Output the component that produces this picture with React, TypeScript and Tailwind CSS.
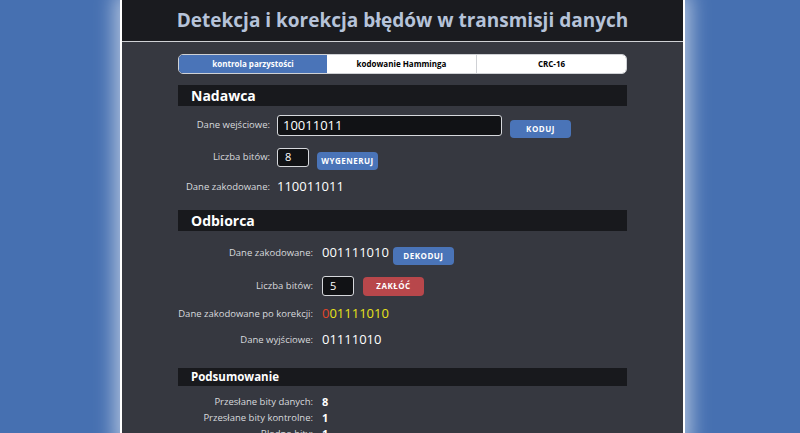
import React from "react"

const font = { fontFamily: '"Open Sans", "Noto Sans", sans-serif' }

const Btn = ({ children, red }: { children: React.ReactNode; red?: boolean }) => (
  <button
    className={
      "h-[18px] w-[61px] rounded-[4px] text-[8px] font-bold tracking-[0.5px] text-white " +
      (red ? "bg-[#b8474b]" : "bg-[#4a74b8]")
    }
  >
    {children}
  </button>
)

const SectionBar = ({ title, small }: { title: string; small?: boolean }) => (
  <div
    className={
      "bg-[#18191d] pl-[13px] font-bold text-white " +
      (small ? "h-[18px] text-[11.5px] leading-[18px]" : "h-[21px] text-[14px] leading-[21px]")
    }
  >
    {title}
  </div>
)

const Label = ({ children, w }: { children: React.ReactNode; w: string }) => (
  <span className={"whitespace-nowrap text-right text-[9.5px] text-[#d8dade] " + w}>{children}</span>
)

export default function App() {
  return (
    <div className="min-h-[433px] bg-[#4670b1] pl-[120px]" style={font}>
      <div className="min-h-[433px] w-[565px] border-x-2 border-white bg-[#363840] shadow-[0_0_18px_6px_rgba(255,255,255,0.55)]">
        <header className="h-[42px] border-b border-[#cfd1d5] bg-[#1a1b1f] text-center text-[19px] font-bold leading-[40px] text-[#b6c3d9]">
          Detekcja i korekcja błędów w transmisji danych
        </header>

        <div className="px-[56px] pt-[12px]">
          {/* tabs */}
          <div className="flex h-[20px] overflow-hidden rounded-[5px] border border-[#cfd1d5] text-[8px] font-bold leading-[18px]">
            <div className="w-[148px] bg-[#4a74b8] text-center text-white">kontrola parzystości</div>
            <div className="w-[150px] border-r border-[#cfd1d5] bg-white text-center text-black">kodowanie Hamminga</div>
            <div className="flex-1 bg-white text-center text-black">CRC-16</div>
          </div>

          <div className="mt-[11px]">
            <SectionBar title="Nadawca" />
          </div>

          {/* sender */}
          <div className="mt-[9px] flex flex-col">
            <div className="flex h-[21px] items-center gap-[7px]">
              <Label w="w-[92px]">Dane wejściowe:</Label>
              <div className="flex h-[21px] w-[225px] items-center rounded-[3px] border border-[#d6d8dc] bg-[#111215] px-[5px] text-[13px] text-white">
                10011011
              </div>
              <span className="ml-[1px]">
                <Btn>KODUJ</Btn>
              </span>
            </div>
            <div className="mt-[12px] flex h-[19px] items-center gap-[7px]">
              <Label w="w-[92px]">Liczba bitów:</Label>
              <div className="flex h-[19px] w-[32px] items-center rounded-[3px] border border-[#d6d8dc] bg-[#111215] px-[7px] text-[11px] text-white">
                8
              </div>
              <span className="ml-[1px]">
                <Btn>WYGENERUJ</Btn>
              </span>
            </div>
            <div className="mt-[12px] flex h-[16px] items-center gap-[7px]">
              <Label w="w-[92px]">Dane zakodowane:</Label>
              <span className="text-[13px] text-white">110011011</span>
            </div>
          </div>

          <div className="mt-[15px]">
            <SectionBar title="Odbiorca" />
          </div>

          {/* receiver */}
          <div className="mt-[13px] flex flex-col">
            <div className="flex h-[18px] items-center">
              <Label w="w-[135px]">Dane zakodowane:</Label>
              <span className="ml-[9px] text-[13px] text-white">001111010</span>
              <span className="ml-[4px]">
                <Btn>DEKODUJ</Btn>
              </span>
            </div>
            <div className="mt-[14px] flex h-[20px] items-center gap-[9px]">
              <Label w="w-[135px]">Liczba bitów:</Label>
              <div className="flex h-[20px] w-[32px] items-center rounded-[3px] border border-[#d6d8dc] bg-[#111215] px-[7px] text-[11px] text-white">
                5
              </div>
              <button className="h-[19px] w-[61px] rounded-[4px] bg-[#b8474b] text-[8px] font-bold tracking-[0.5px] text-white">
                ZAKŁÓĆ
              </button>
            </div>
            <div className="mt-[10px] flex h-[16px] items-center gap-[9px]">
              <Label w="w-[135px]">Dane zakodowane po korekcji:</Label>
              <span className="text-[13px] text-[#e8e21a]">
                <span className="text-[#e2452a]">0</span>01111010
              </span>
            </div>
            <div className="mt-[10px] flex h-[16px] items-center gap-[9px]">
              <Label w="w-[135px]">Dane wyjściowe:</Label>
              <span className="text-[13px] text-white">01111010</span>
            </div>
          </div>

          <div className="mt-[20px]">
            <SectionBar title="Podsumowanie" small />
          </div>

          {/* summary */}
          <div className="mt-[10px] flex flex-col gap-[3px]">
            <div className="flex h-[13px] items-center gap-[9px]">
              <Label w="w-[135px]">Przesłane bity danych:</Label>
              <span className="text-[11px] font-bold text-white">8</span>
            </div>
            <div className="flex h-[13px] items-center gap-[9px]">
              <Label w="w-[135px]">Przesłane bity kontrolne:</Label>
              <span className="text-[11px] font-bold text-white">1</span>
            </div>
            <div className="flex h-[13px] items-center gap-[9px]">
              <Label w="w-[135px]">Błędne bity:</Label>
              <span className="text-[11px] font-bold text-white">1</span>
            </div>
          </div>
        </div>
      </div>
    </div>
  )
}
